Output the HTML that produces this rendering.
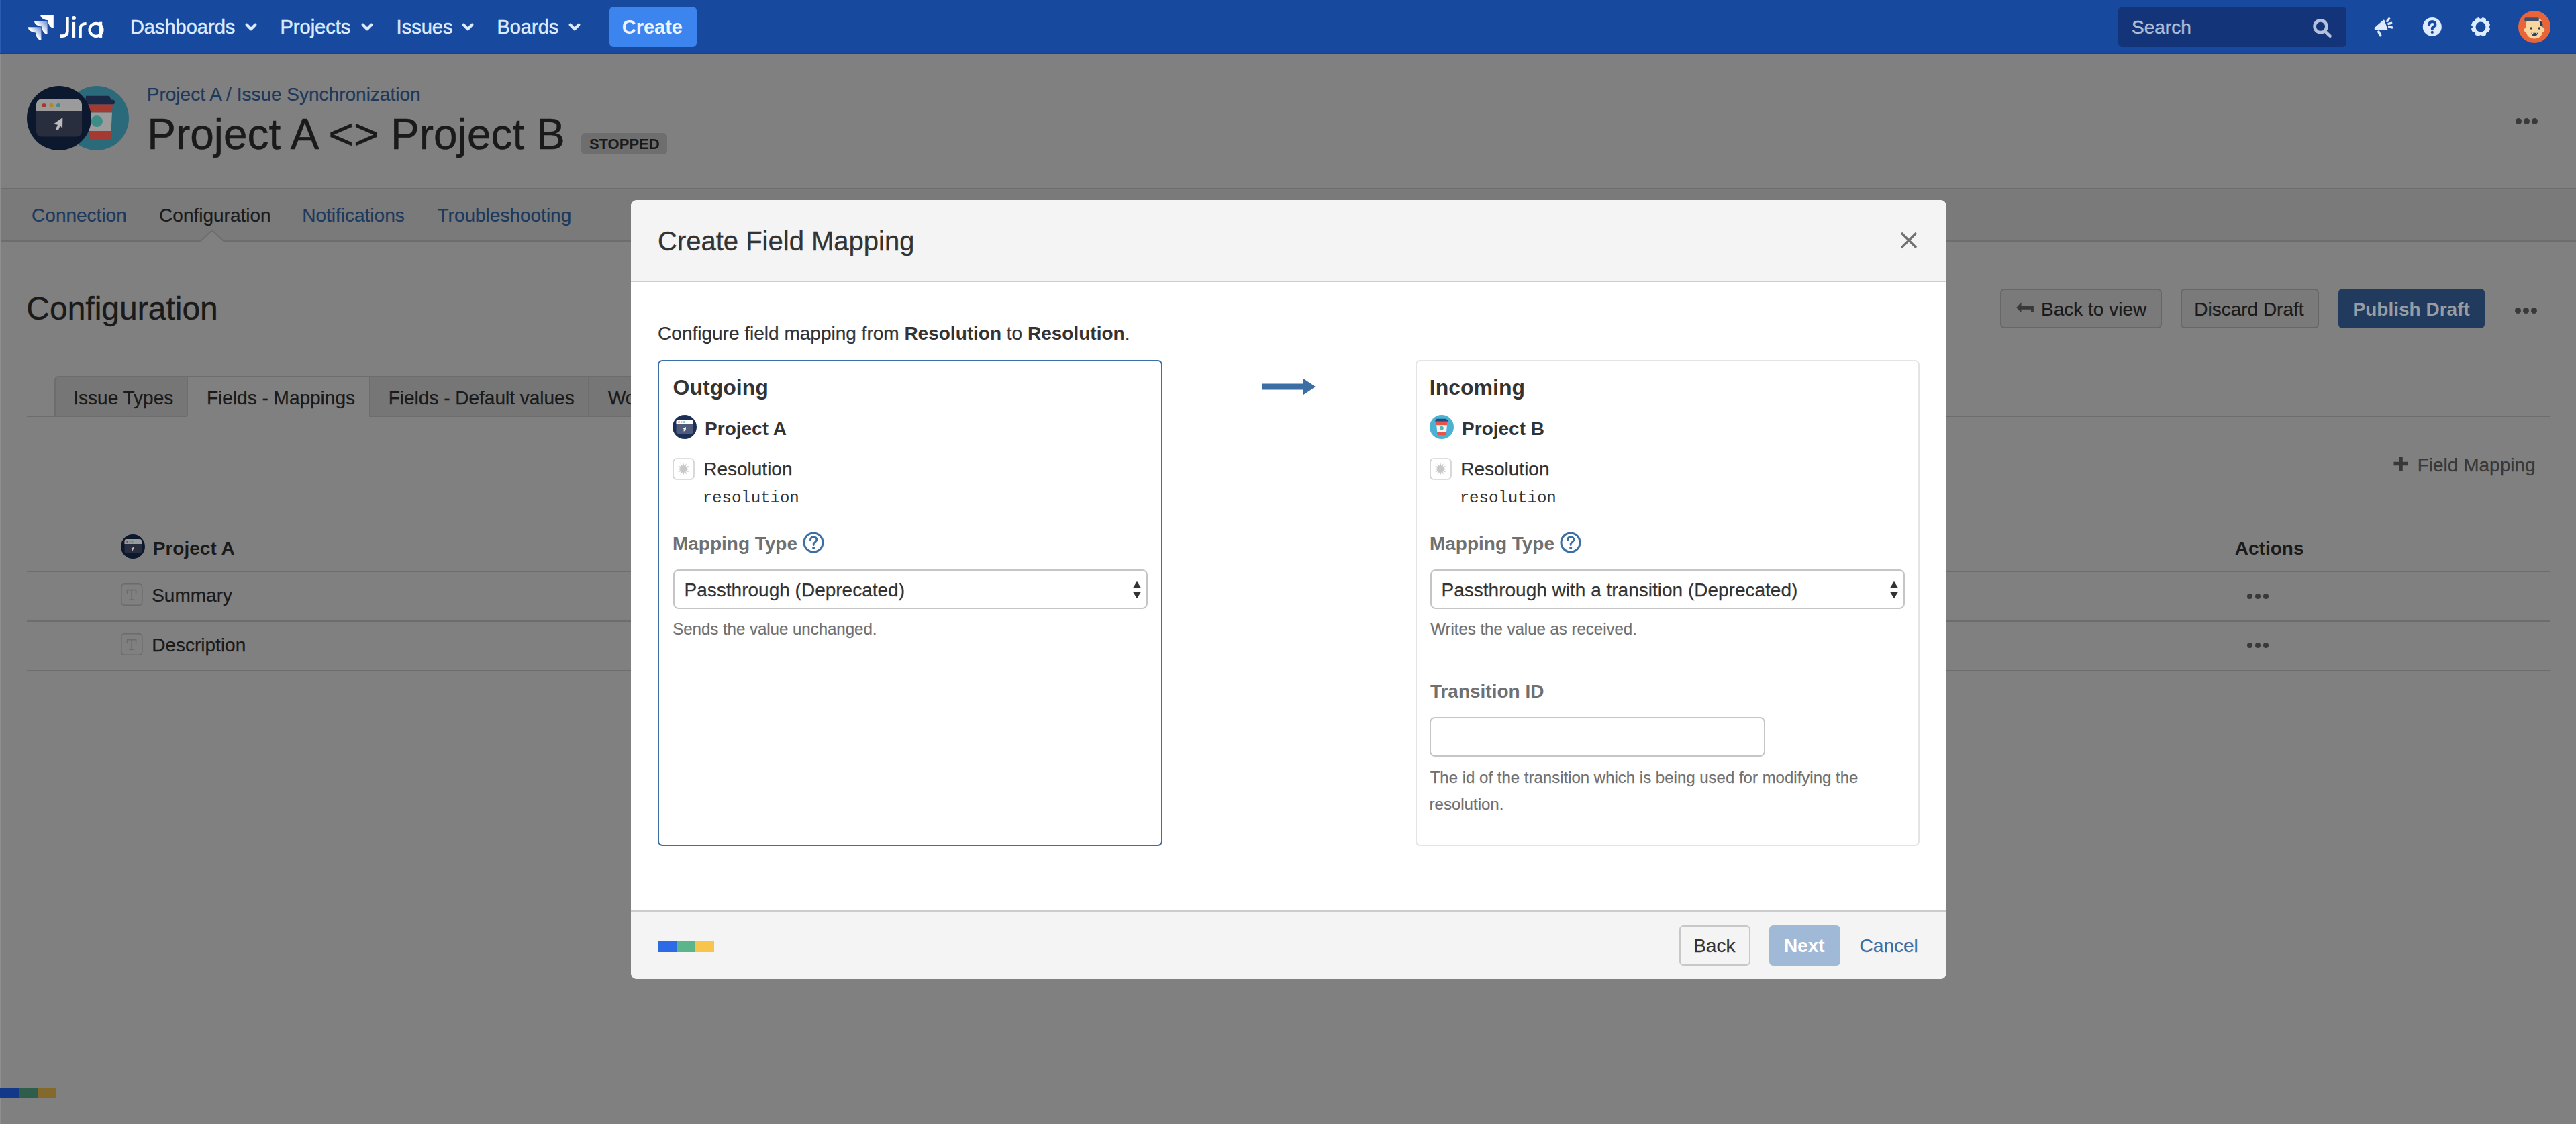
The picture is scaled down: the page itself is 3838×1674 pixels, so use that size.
<!DOCTYPE html>
<html><head><meta charset="utf-8"><title>Create Field Mapping</title>
<style>
html,body{margin:0;padding:0;width:3838px;height:1674px;overflow:hidden;background:#808080;font-family:"Liberation Sans",sans-serif}
.t{position:absolute;white-space:pre}
.sw{-webkit-text-stroke:0.25px currentColor}
.sw b{-webkit-text-stroke:0}
.b{position:absolute;display:block}
b{font-weight:700}
</style></head><body>
<div class="b" style="left:0px;top:0px;width:3838px;height:80px;background:#174a9f"></div>
<svg class="b" style="left:30px;top:15px" width="130" height="50" viewBox="0 0 130 50"><defs><linearGradient id="jg" gradientUnits="objectBoundingBox" x1="1" y1="0" x2="0.45" y2="0.5"><stop offset="0" stop-color="#5f83cf"/><stop offset="1" stop-color="#fff"/></linearGradient></defs><path d="M30.2 6.9 H49.8 V26.5 A8.3 11.3 0 0 1 41.5 15.200000000000001 A11.3 8.3 0 0 1 30.2 6.9 Z" fill="#fff"/><path d="M21 16.1 H40.6 V35.7 A8.3 11.3 0 0 1 32.3 24.400000000000002 A11.3 8.3 0 0 1 21 16.1 Z" fill="url(#jg)"/><path d="M11.8 25.2 H31.400000000000002 V44.8 A8.3 11.3 0 0 1 23.1 33.5 A11.3 8.3 0 0 1 11.8 25.2 Z" fill="url(#jg)"/><g fill="none" stroke="#fff" stroke-width="4.6"><path d="M70.4 10.9 V31 Q70.4 38.6 63 38.6 H59.3"/><path d="M80 17.9 V40.9" stroke-width="4.2"/><path d="M89.7 40.9 V27.5 Q89.7 20 98.6 20" stroke-width="4.2"/><circle cx="113" cy="29.3" r="9.5" stroke-width="4.2"/><path d="M120.1 17.7 V40.9" stroke-width="4.2"/></g><circle cx="80" cy="11.9" r="2.9" fill="#fff"/></svg>
<div class="t sw" style="left:193.9px;top:26.30px;font-size:29px;line-height:29px;font-weight:400;color:#deebff;font-family:'Liberation Sans',sans-serif;transform-origin:0 24.6px;-webkit-text-stroke:0.5px currentColor">Dashboards</div>
<svg class="b" style="left:363.5px;top:30px" width="20.0" height="20" viewBox="0 0 20.0 20"><path d="M3.7 6.7 L10 13.2 L16.3 6.7" fill="none" stroke="#deebff" stroke-width="4.3" stroke-linecap="round" stroke-linejoin="round"/></svg>
<div class="t sw" style="left:417.5px;top:26.30px;font-size:29px;line-height:29px;font-weight:400;color:#deebff;font-family:'Liberation Sans',sans-serif;transform-origin:0 24.6px;-webkit-text-stroke:0.5px currentColor">Projects</div>
<svg class="b" style="left:536.8px;top:30px" width="20.0" height="20" viewBox="0 0 20.0 20"><path d="M3.7 6.7 L10 13.2 L16.3 6.7" fill="none" stroke="#deebff" stroke-width="4.3" stroke-linecap="round" stroke-linejoin="round"/></svg>
<div class="t sw" style="left:590.6px;top:26.30px;font-size:29px;line-height:29px;font-weight:400;color:#deebff;font-family:'Liberation Sans',sans-serif;transform-origin:0 24.6px;-webkit-text-stroke:0.5px currentColor">Issues</div>
<svg class="b" style="left:686.8px;top:30px" width="20.0" height="20" viewBox="0 0 20.0 20"><path d="M3.7 6.7 L10 13.2 L16.3 6.7" fill="none" stroke="#deebff" stroke-width="4.3" stroke-linecap="round" stroke-linejoin="round"/></svg>
<div class="t sw" style="left:740.4px;top:26.30px;font-size:29px;line-height:29px;font-weight:400;color:#deebff;font-family:'Liberation Sans',sans-serif;transform-origin:0 24.6px;-webkit-text-stroke:0.5px currentColor">Boards</div>
<svg class="b" style="left:845.5px;top:30px" width="20.0" height="20" viewBox="0 0 20.0 20"><path d="M3.7 6.7 L10 13.2 L16.3 6.7" fill="none" stroke="#deebff" stroke-width="4.3" stroke-linecap="round" stroke-linejoin="round"/></svg>
<div class="b" style="left:908px;top:10px;width:130px;height:60px;background:#3c85ef;border-radius:6px"></div>
<div class="t" style="left:926.7px;top:25.80px;font-size:29px;line-height:29px;font-weight:700;color:#eef3ff;font-family:'Liberation Sans',sans-serif;transform-origin:0 24.6px;">Create</div>
<div class="b" style="left:3156px;top:10px;width:340px;height:60px;background:#133478;border-radius:6px"></div>
<div class="t sw" style="left:3176.0px;top:27.30px;font-size:28px;line-height:28px;font-weight:400;color:#b0bdd9;font-family:'Liberation Sans',sans-serif;transform-origin:0 23.7px;-webkit-text-stroke:0.45px currentColor">Search</div>
<svg class="b" style="left:3440px;top:22px" width="40" height="38" viewBox="0 0 40 38"><circle cx="17.5" cy="17.3" r="8.9" fill="none" stroke="#b4c0dc" stroke-width="4.7"/><path d="M24.6 25 L31.6 31.7" stroke="#b4c0dc" stroke-width="4.6" stroke-linecap="round"/></svg>
<svg class="b" style="left:3534px;top:24px" width="36" height="32" viewBox="0 0 36 32"><path d="M4.6 17.8 L17.7 6.5 L22.3 19.6 L5 19.9Z" fill="#deebff" stroke="#deebff" stroke-width="2" stroke-linejoin="round"/><path d="M10 23.2 L12.6 28.6" stroke="#deebff" stroke-width="3.8" stroke-linecap="round"/><path d="M22.8 7.6 L25.6 3.8" stroke="#deebff" stroke-width="3.4" stroke-linecap="round"/><path d="M24.8 11.4 L28.7 10.3" stroke="#deebff" stroke-width="3.4" stroke-linecap="round"/><path d="M25.6 15.8 L29.8 16.9" stroke="#deebff" stroke-width="3.4" stroke-linecap="round"/></svg>
<svg class="b" style="left:3608px;top:24px" width="32" height="32" viewBox="0 0 32 32"><circle cx="15.8" cy="15.9" r="14" fill="#deebff"/><path d="M11.3 12.6 C11.3 9.6 13.3 7.9 15.8 7.9 C18.4 7.9 20.4 9.7 20.4 12.2 C20.4 15 17.6 15.6 16 17.3 L15.8 19.3" fill="none" stroke="#174a9f" stroke-width="4" stroke-linecap="round"/><circle cx="15.8" cy="23.9" r="2.1" fill="#174a9f"/></svg>
<svg class="b" style="left:3680px;top:24px" width="32" height="32" viewBox="0 0 32 32"><circle cx="16" cy="16" r="12" fill="#deebff"/><path d="M27.55 17.07 L29.36 19.03 L27.59 23.31 L24.93 23.41 L23.41 24.93 L23.31 27.59 L19.03 29.36 L17.07 27.55 L14.93 27.55 L12.97 29.36 L8.69 27.59 L8.59 24.93 L7.07 23.41 L4.41 23.31 L2.64 19.03 L4.45 17.07 L4.45 14.93 L2.64 12.97 L4.41 8.69 L7.07 8.59 L8.59 7.07 L8.69 4.41 L12.97 2.64 L14.93 4.45 L17.07 4.45 L19.03 2.64 L23.31 4.41 L23.41 7.07 L24.93 8.59 L27.59 8.69 L29.36 12.97 L27.55 14.93Z" fill="#deebff" stroke="#deebff" stroke-width="1.2" stroke-linejoin="round"/><circle cx="16" cy="16" r="7.5" fill="#174a9f"/></svg>
<svg class="b" style="left:3752px;top:16px" width="48" height="48" viewBox="0 0 48 48"><circle cx="24" cy="24" r="24" fill="#ea643a"/><path d="M11.5 22 C11.5 13 16 11 24 11 C32 11 36.5 13 36.5 22 L36.5 29 C36.5 37 31 41.5 24 41.5 C17 41.5 11.5 37 11.5 29Z" fill="#f7d79f"/><circle cx="11.5" cy="28.5" r="2.8" fill="#f7d79f"/><circle cx="36.5" cy="28.5" r="2.8" fill="#f7d79f"/><rect x="9.3" y="10.3" width="21.5" height="5.2" rx="1.5" fill="#3f4e6e"/><path d="M31.5 15.5 C35 15 37 18 36.5 24 L33 22.5 Z" fill="#233559"/><circle cx="19.2" cy="26" r="1.7" fill="#3a3a3a"/><circle cx="31.3" cy="26" r="1.7" fill="#3a3a3a"/><path d="M19.3 32.8 H29.2 C28.4 36.5 26.4 38 24.2 38 C22 38 20.1 36.5 19.3 32.8Z" fill="#34405e"/><path d="M20.5 32.8 l1 2.3 l1.2-2.3Z M25.8 32.8 l1.2 2.3 l1-2.3Z" fill="#fff"/></svg>
<svg class="b" style="left:36px;top:124px" width="160" height="104" viewBox="0 0 160 104"><circle cx="108" cy="52" r="48" fill="#2b6a7b"/><path d="M92 18.8 L127 18.8 L129.5 24.5 L131.5 24.5 A3.5 3.5 0 0 1 131.5 31.6 L91 31.6Z" fill="#1a2846"/><path d="M91.5 31.6 L132 31.6 L130.7 43.6 L93 43.6Z" fill="#a43a31"/><path d="M93 43.6 L131 43.6 L129.5 70.9 L95.5 70.9Z" fill="#9c9c9c"/><path d="M95.5 70.9 L129.5 70.9 L128.5 84.5 L97 84.5Z" fill="#a43a31"/><circle cx="108.3" cy="56.5" r="8.6" fill="#3b8d86"/><circle cx="52" cy="52" r="48" fill="#0c182e"/><rect x="18" y="23.5" width="68" height="56" rx="8" fill="#282e3d"/><path d="M26 23.5 H78 A8 8 0 0 1 86 31.5 V41.5 H18 V31.5 A8 8 0 0 1 26 23.5Z" fill="#9b9b9b"/><circle cx="29.5" cy="33" r="3" fill="#a33a30"/><circle cx="40.5" cy="33" r="3" fill="#b3842b"/><circle cx="51" cy="33" r="3" fill="#3c8c87"/><path d="M56.9 51.7 L44.8 60.3 L50.6 61.4 L47.4 68.4 L50.5 69.6 L53.6 62.6 L56.6 66.2Z" fill="#bcbcbc" stroke="#bcbcbc" stroke-width="0.8" stroke-linejoin="round"/></svg>
<div class="t sw" style="left:218.8px;top:127.30px;font-size:28px;line-height:28px;font-weight:400;color:#1d395c;font-family:'Liberation Sans',sans-serif;transform-origin:0 23.7px;">Project A / Issue Synchronization</div>
<div class="t sw" style="left:219.2px;top:168.31px;font-size:64px;line-height:64px;font-weight:400;color:#1a1a1a;font-family:'Liberation Sans',sans-serif;transform-origin:0 54.2px;-webkit-text-stroke:0.5px currentColor">Project A &lt;&gt; Project B</div>
<div class="b" style="left:866px;top:198px;width:128px;height:32px;background:#6e6e6e;border-radius:6px"></div>
<div class="t" style="left:877.9px;top:203.91px;font-size:22px;line-height:22px;font-weight:700;color:#1a1a1a;font-family:'Liberation Sans',sans-serif;transform-origin:0 18.6px;">STOPPED</div>
<div class="b" style="left:3748.0px;top:175.5px;width:9.0px;height:9.0px;background:#393939;border-radius:50%"></div>
<div class="b" style="left:3759.75px;top:175.5px;width:9.0px;height:9.0px;background:#393939;border-radius:50%"></div>
<div class="b" style="left:3771.5px;top:175.5px;width:9.0px;height:9.0px;background:#393939;border-radius:50%"></div>
<div class="b" style="left:0px;top:282px;width:3838px;height:76px;background:#7a7a7b"></div>
<div class="b" style="left:0px;top:280px;width:3838px;height:2px;background:#6d6d6d"></div>
<svg class="b" style="left:0px;top:330px" width="3838" height="32" viewBox="0 0 3838 32"><path d="M0 29 H299 L316 13 L333 29 H3838" fill="#808080" stroke="none"/><path d="M0 28.5 H299 L316 12 L333 28.5 H3838 V32 H0Z" fill="#808080"/><path d="M0 29 H299 L316 13 L333 29 H3838" fill="none" stroke="#6d6d6d" stroke-width="2"/></svg>
<div class="t sw" style="left:47.1px;top:307.00px;font-size:28px;line-height:28px;font-weight:400;color:#1d395c;font-family:'Liberation Sans',sans-serif;transform-origin:0 23.7px;">Connection</div>
<div class="t sw" style="left:237.1px;top:307.00px;font-size:28px;line-height:28px;font-weight:400;color:#1a1a1a;font-family:'Liberation Sans',sans-serif;transform-origin:0 23.7px;">Configuration</div>
<div class="t sw" style="left:450.2px;top:307.00px;font-size:28px;line-height:28px;font-weight:400;color:#1d395c;font-family:'Liberation Sans',sans-serif;transform-origin:0 23.7px;">Notifications</div>
<div class="t sw" style="left:651.5px;top:307.00px;font-size:28px;line-height:28px;font-weight:400;color:#1d395c;font-family:'Liberation Sans',sans-serif;transform-origin:0 23.7px;">Troubleshooting</div>
<div class="t sw" style="left:39.3px;top:436.31px;font-size:48px;line-height:48px;font-weight:400;color:#1a1a1a;font-family:'Liberation Sans',sans-serif;transform-origin:0 40.6px;-webkit-text-stroke:0.4px currentColor">Configuration</div>
<div class="b" style="left:2980px;top:430px;width:241px;height:59px;background:#7a7a7a;border:2px solid #676767;border-radius:6px;box-sizing:border-box"></div>
<svg class="b" style="left:3002px;top:450px" width="30" height="22" viewBox="0 0 30 22"><path d="M2.2 7.9 L9.5 0.3 V5.1 H27.9 V14.9 H24 V10.8 H9.5 V15.4 Z" fill="#393939"/></svg>
<div class="t sw" style="left:3041.0px;top:447.30px;font-size:28px;line-height:28px;font-weight:400;color:#1a1a1a;font-family:'Liberation Sans',sans-serif;transform-origin:0 23.7px;">Back to view</div>
<div class="b" style="left:3249px;top:430px;width:206px;height:59px;background:#7a7a7a;border:2px solid #676767;border-radius:6px;box-sizing:border-box"></div>
<div class="t sw" style="left:3269.2px;top:447.30px;font-size:28px;line-height:28px;font-weight:400;color:#1a1a1a;font-family:'Liberation Sans',sans-serif;transform-origin:0 23.7px;">Discard Draft</div>
<div class="b" style="left:3484px;top:430px;width:218px;height:59px;background:#213b5e;border-radius:6px"></div>
<div class="t" style="left:3505.6px;top:447.30px;font-size:28px;line-height:28px;font-weight:700;color:#989da4;font-family:'Liberation Sans',sans-serif;transform-origin:0 23.7px;">Publish Draft</div>
<div class="b" style="left:3747.0px;top:457.5px;width:9.0px;height:9.0px;background:#393939;border-radius:50%"></div>
<div class="b" style="left:3759.0px;top:457.5px;width:9.0px;height:9.0px;background:#393939;border-radius:50%"></div>
<div class="b" style="left:3771.0px;top:457.5px;width:9.0px;height:9.0px;background:#393939;border-radius:50%"></div>
<div class="b" style="left:81px;top:560px;width:1019px;height:61px;background:#767676;border-top:2px solid #6d6d6d;border-left:2px solid #6d6d6d;border-radius:6px 0 0 0;box-sizing:border-box"></div>
<div class="b" style="left:279px;top:562px;width:272px;height:59px;background:#808080"></div>
<div class="b" style="left:278px;top:562px;width:2px;height:57px;background:#6d6d6d"></div>
<div class="b" style="left:550px;top:562px;width:2px;height:59px;background:#6d6d6d"></div>
<div class="b" style="left:876px;top:562px;width:2px;height:59px;background:#6d6d6d"></div>
<div class="b" style="left:40px;top:619px;width:239px;height:2px;background:#6d6d6d"></div>
<div class="b" style="left:551px;top:619px;width:3249px;height:2px;background:#6d6d6d"></div>
<div class="t sw" style="left:109.3px;top:579.30px;font-size:28px;line-height:28px;font-weight:400;color:#1a1a1a;font-family:'Liberation Sans',sans-serif;transform-origin:0 23.7px;">Issue Types</div>
<div class="t sw" style="left:308.0px;top:579.30px;font-size:28px;line-height:28px;font-weight:400;color:#1a1a1a;font-family:'Liberation Sans',sans-serif;transform-origin:0 23.7px;">Fields - Mappings</div>
<div class="t sw" style="left:578.7px;top:579.30px;font-size:28px;line-height:28px;font-weight:400;color:#1a1a1a;font-family:'Liberation Sans',sans-serif;transform-origin:0 23.7px;">Fields - Default values</div>
<div class="t sw" style="left:905.9px;top:579.30px;font-size:28px;line-height:28px;font-weight:400;color:#1a1a1a;font-family:'Liberation Sans',sans-serif;transform-origin:0 23.7px;">Workflows</div>
<svg class="b" style="left:3564px;top:678px" width="26" height="25" viewBox="0 0 26 25"><path d="M13 2 V23 M2.5 12.5 H23.5" stroke="#383838" stroke-width="5.5"/></svg>
<div class="t sw" style="left:3601.7px;top:679.30px;font-size:28px;line-height:28px;font-weight:400;color:#383838;font-family:'Liberation Sans',sans-serif;transform-origin:0 23.7px;">Field Mapping</div>
<svg class="b" style="left:180px;top:796px" width="36" height="36" viewBox="0 0 36 36"><circle cx="18" cy="18" r="18" fill="#0c182e"/><rect x="5.5" y="7" width="25.5" height="21" rx="3" fill="#282e3d"/><path d="M8.5 7 H28 A3 3 0 0 1 31 10 V14 H5.5 V10 A3 3 0 0 1 8.5 7Z" fill="#9b9b9b"/><circle cx="9.5" cy="10.6" r="1.3" fill="#a33a30"/><circle cx="13.3" cy="10.6" r="1.3" fill="#b3842b"/><circle cx="17" cy="10.6" r="1.3" fill="#3c8c87"/><path d="M19.84 17.89 L15.30 21.11 L17.48 21.52 L16.27 24.15 L17.44 24.60 L18.60 21.98 L19.73 23.33Z" fill="#bcbcbc"/></svg>
<div class="t" style="left:227.8px;top:803.30px;font-size:28px;line-height:28px;font-weight:700;color:#1a1a1a;font-family:'Liberation Sans',sans-serif;transform-origin:0 23.7px;">Project A</div>
<div class="t" style="left:3329.8px;top:802.80px;font-size:28px;line-height:28px;font-weight:700;color:#1a1a1a;font-family:'Liberation Sans',sans-serif;transform-origin:0 23.7px;">Actions</div>
<div class="b" style="left:40px;top:850px;width:3760px;height:2px;background:#6d6d6d"></div>
<div class="b" style="left:40px;top:924px;width:3760px;height:2px;background:#6d6d6d"></div>
<div class="b" style="left:40px;top:998px;width:3760px;height:2px;background:#6d6d6d"></div>
<svg class="b" style="left:180px;top:869px" width="33" height="33" viewBox="0 0 33 33"><rect x="0.8" y="0.8" width="31" height="31.4" rx="4.5" fill="none" stroke="#6b6b6b" stroke-width="1.6"/><g fill="none" stroke="#6b6b6b" stroke-width="1.7"><path d="M9.6 15.2 V9.6 H22.6 V15.2"/><path d="M16.1 9.6 V24.2"/><path d="M12 24.2 H20.2"/></g></svg>
<div class="t sw" style="left:226.2px;top:873.30px;font-size:28px;line-height:28px;font-weight:400;color:#1a1a1a;font-family:'Liberation Sans',sans-serif;transform-origin:0 23.7px;">Summary</div>
<div class="b" style="left:3347.8px;top:883.8px;width:8.399999999999636px;height:8.400000000000091px;background:#393939;border-radius:50%"></div>
<div class="b" style="left:3359.8px;top:883.8px;width:8.399999999999636px;height:8.400000000000091px;background:#393939;border-radius:50%"></div>
<div class="b" style="left:3371.8px;top:883.8px;width:8.399999999999636px;height:8.400000000000091px;background:#393939;border-radius:50%"></div>
<svg class="b" style="left:180px;top:943px" width="33" height="33" viewBox="0 0 33 33"><rect x="0.8" y="0.8" width="31" height="31.4" rx="4.5" fill="none" stroke="#6b6b6b" stroke-width="1.6"/><g fill="none" stroke="#6b6b6b" stroke-width="1.7"><path d="M9.6 15.2 V9.6 H22.6 V15.2"/><path d="M16.1 9.6 V24.2"/><path d="M12 24.2 H20.2"/></g></svg>
<div class="t sw" style="left:226.2px;top:947.30px;font-size:28px;line-height:28px;font-weight:400;color:#1a1a1a;font-family:'Liberation Sans',sans-serif;transform-origin:0 23.7px;">Description</div>
<div class="b" style="left:3347.8px;top:956.8px;width:8.399999999999636px;height:8.400000000000091px;background:#393939;border-radius:50%"></div>
<div class="b" style="left:3359.8px;top:956.8px;width:8.399999999999636px;height:8.400000000000091px;background:#393939;border-radius:50%"></div>
<div class="b" style="left:3371.8px;top:956.8px;width:8.399999999999636px;height:8.400000000000091px;background:#393939;border-radius:50%"></div>
<div class="b" style="left:0px;top:80px;width:1px;height:1594px;background:#8e8e8e"></div>
<div class="b" style="left:0px;top:0px;width:1px;height:80px;background:#2c5cb0"></div>
<div class="b" style="left:0px;top:79px;width:3838px;height:1px;background:#15428f"></div>
<div class="b" style="left:0px;top:1620px;width:28px;height:16px;background:#12388a"></div>
<div class="b" style="left:28px;top:1620px;width:28px;height:16px;background:#2e5e4b"></div>
<div class="b" style="left:56px;top:1620px;width:28px;height:16px;background:#836a2c"></div>
<div class="b" style="left:940px;top:298px;width:1960px;height:1160px;background:#fff;border-radius:9px;overflow:hidden"></div>
<div class="b" style="left:940px;top:298px;width:1960px;height:120px;background:#f4f4f4;border-radius:9px 9px 0 0"></div>
<div class="b" style="left:940px;top:418px;width:1960px;height:2px;background:#cccccc"></div>
<div class="t sw" style="left:980.0px;top:339.00px;font-size:40px;line-height:40px;font-weight:400;color:#333;font-family:'Liberation Sans',sans-serif;transform-origin:0 33.9px;-webkit-text-stroke:0.35px currentColor">Create Field Mapping</div>
<svg class="b" style="left:2830px;top:344px" width="28" height="28" viewBox="0 0 28 28"><path d="M3 3 L25 25 M25 3 L3 25" stroke="#707070" stroke-width="3.2"/></svg>
<div class="t sw" style="left:980.1px;top:483.30px;font-size:28px;line-height:28px;font-weight:400;color:#333;font-family:'Liberation Sans',sans-serif;transform-origin:0 23.7px;">Configure field mapping from <b>Resolution</b> to <b>Resolution</b>.</div>
<div class="b" style="left:980px;top:536px;width:752px;height:724px;border:2px solid #3b6ea5;border-radius:7px;box-sizing:border-box"></div>
<div class="b" style="left:2109px;top:536px;width:751px;height:724px;border:2px solid #e4e4e4;border-radius:7px;box-sizing:border-box"></div>
<svg class="b" style="left:1878px;top:562px" width="84" height="28" viewBox="0 0 84 28"><path d="M2 9.5 H64 V2 L82 14 L64 26 V18.5 H2Z" fill="#3b6ea5"/></svg>
<div class="t" style="left:1002.6px;top:561.31px;font-size:32px;line-height:32px;font-weight:700;color:#333;font-family:'Liberation Sans',sans-serif;transform-origin:0 27.1px;">Outgoing</div>
<div class="t" style="left:1050.1px;top:625.30px;font-size:28px;line-height:28px;font-weight:700;color:#333;font-family:'Liberation Sans',sans-serif;transform-origin:0 23.7px;">Project A</div>
<svg class="b" style="left:1001.5px;top:681.5px" width="33.0" height="33.0" viewBox="0 0 33.0 33.0"><rect x="1" y="1" width="31" height="31" rx="5.5" fill="#fff" stroke="#d3d3d3" stroke-width="1.7"/><path d="M25.70 16.50 L20.84 17.74 L24.43 21.25 L19.59 19.89 L20.95 24.73 L17.44 21.14 L16.20 26.00 L14.96 21.14 L11.45 24.73 L12.81 19.89 L7.97 21.25 L11.56 17.74 L6.70 16.50 L11.56 15.26 L7.97 11.75 L12.81 13.11 L11.45 8.27 L14.96 11.86 L16.20 7.00 L17.44 11.86 L20.95 8.27 L19.59 13.11 L24.43 11.75 L20.84 15.26Z" fill="#c8c8c8"/></svg>
<div class="t sw" style="left:1048.2px;top:685.30px;font-size:28px;line-height:28px;font-weight:400;color:#333;font-family:'Liberation Sans',sans-serif;transform-origin:0 23.7px;">Resolution</div>
<div class="t" style="left:1046.7px;top:730.30px;font-size:24px;line-height:24px;font-weight:400;color:#333;font-family:'Liberation Mono',monospace;transform-origin:0 18.4px;">resolution</div>
<div class="t" style="left:1001.9px;top:796.00px;font-size:28px;line-height:28px;font-weight:700;color:#707070;font-family:'Liberation Sans',sans-serif;transform-origin:0 23.7px;">Mapping Type</div>
<svg class="b" style="left:1196px;top:792px" width="33" height="33" viewBox="0 0 33 33"><circle cx="16" cy="16" r="14" fill="none" stroke="#3b6ea5" stroke-width="3"/><path d="M11.5 12.5 C11.5 9.3 13.6 7.6 16.2 7.6 C18.9 7.6 20.8 9.4 20.8 11.8 C20.8 14.8 17.1 15.3 16.2 17.8 L16.2 19.6" fill="none" stroke="#3b6ea5" stroke-width="2.9" stroke-linecap="round"/><circle cx="16.2" cy="24" r="2.1" fill="#3b6ea5"/></svg>
<div class="b" style="left:1003px;top:848px;width:707px;height:59px;border:2px solid #c5c5c5;border-radius:8px;box-sizing:border-box;background:#fff"></div>
<div class="t sw" style="left:1019.6px;top:864.80px;font-size:28px;line-height:28px;font-weight:400;color:#333;font-family:'Liberation Sans',sans-serif;transform-origin:0 23.7px;">Passthrough (Deprecated)</div>
<svg class="b" style="left:1686.5px;top:864.5px" width="16.0" height="28.0" viewBox="0 0 16.0 28.0"><path d="M0.7 11 L7 0.8 L13.3 11Z M0.7 16 L7 26.2 L13.3 16Z" fill="#333"/></svg>
<div class="t sw" style="left:1002.2px;top:925.32px;font-size:24px;line-height:24px;font-weight:400;color:#707070;font-family:'Liberation Sans',sans-serif;transform-origin:0 20.3px;">Sends the value unchanged.</div>
<svg class="b" style="left:1002px;top:618px" width="36" height="36" viewBox="0 0 36 36"><circle cx="18" cy="18" r="18" fill="#1b2e58"/><rect x="5.5" y="7" width="25.5" height="21" rx="3" fill="#4f5b7b"/><path d="M8.5 7 H28 A3 3 0 0 1 31 10 V14 H5.5 V10 A3 3 0 0 1 8.5 7Z" fill="#ffffff"/><circle cx="9.5" cy="10.6" r="1.3" fill="#e5493a"/><circle cx="13.3" cy="10.6" r="1.3" fill="#f0b43c"/><circle cx="17" cy="10.6" r="1.3" fill="#4dc4bb"/><path d="M19.84 17.89 L15.30 21.11 L17.48 21.52 L16.27 24.15 L17.44 24.60 L18.60 21.98 L19.73 23.33Z" fill="#ffffff"/></svg>
<div class="t" style="left:2129.8px;top:561.31px;font-size:32px;line-height:32px;font-weight:700;color:#333;font-family:'Liberation Sans',sans-serif;transform-origin:0 27.1px;">Incoming</div>
<div class="t" style="left:2178.1px;top:625.30px;font-size:28px;line-height:28px;font-weight:700;color:#333;font-family:'Liberation Sans',sans-serif;transform-origin:0 23.7px;">Project B</div>
<svg class="b" style="left:2129.5px;top:681.5px" width="33.0" height="33.0" viewBox="0 0 33.0 33.0"><rect x="1" y="1" width="31" height="31" rx="5.5" fill="#fff" stroke="#d3d3d3" stroke-width="1.7"/><path d="M25.70 16.50 L20.84 17.74 L24.43 21.25 L19.59 19.89 L20.95 24.73 L17.44 21.14 L16.20 26.00 L14.96 21.14 L11.45 24.73 L12.81 19.89 L7.97 21.25 L11.56 17.74 L6.70 16.50 L11.56 15.26 L7.97 11.75 L12.81 13.11 L11.45 8.27 L14.96 11.86 L16.20 7.00 L17.44 11.86 L20.95 8.27 L19.59 13.11 L24.43 11.75 L20.84 15.26Z" fill="#c8c8c8"/></svg>
<div class="t sw" style="left:2176.2px;top:685.30px;font-size:28px;line-height:28px;font-weight:400;color:#333;font-family:'Liberation Sans',sans-serif;transform-origin:0 23.7px;">Resolution</div>
<div class="t" style="left:2174.7px;top:730.30px;font-size:24px;line-height:24px;font-weight:400;color:#333;font-family:'Liberation Mono',monospace;transform-origin:0 18.4px;">resolution</div>
<div class="t" style="left:2129.9px;top:796.00px;font-size:28px;line-height:28px;font-weight:700;color:#707070;font-family:'Liberation Sans',sans-serif;transform-origin:0 23.7px;">Mapping Type</div>
<svg class="b" style="left:2324px;top:792px" width="33" height="33" viewBox="0 0 33 33"><circle cx="16" cy="16" r="14" fill="none" stroke="#3b6ea5" stroke-width="3"/><path d="M11.5 12.5 C11.5 9.3 13.6 7.6 16.2 7.6 C18.9 7.6 20.8 9.4 20.8 11.8 C20.8 14.8 17.1 15.3 16.2 17.8 L16.2 19.6" fill="none" stroke="#3b6ea5" stroke-width="2.9" stroke-linecap="round"/><circle cx="16.2" cy="24" r="2.1" fill="#3b6ea5"/></svg>
<div class="b" style="left:2131px;top:848px;width:707px;height:59px;border:2px solid #c5c5c5;border-radius:8px;box-sizing:border-box;background:#fff"></div>
<div class="t sw" style="left:2147.6px;top:864.80px;font-size:28px;line-height:28px;font-weight:400;color:#333;font-family:'Liberation Sans',sans-serif;transform-origin:0 23.7px;">Passthrough with a transition (Deprecated)</div>
<svg class="b" style="left:2814.5px;top:864.5px" width="16.0" height="28.0" viewBox="0 0 16.0 28.0"><path d="M0.7 11 L7 0.8 L13.3 11Z M0.7 16 L7 26.2 L13.3 16Z" fill="#333"/></svg>
<div class="t sw" style="left:2131.2px;top:925.32px;font-size:24px;line-height:24px;font-weight:400;color:#707070;font-family:'Liberation Sans',sans-serif;transform-origin:0 20.3px;">Writes the value as received.</div>
<svg class="b" style="left:2130px;top:618px" width="36" height="36" viewBox="0 0 36 36"><circle cx="18" cy="18" r="18" fill="#4cb2d4"/><path d="M10.5 5.7 H25 L26 8 H27.6 V9.7 H8.4 V8 H9.5Z" fill="#234a78"/><path d="M9.7 9.7 H26.3 L25.9 15.3 H10.2Z" fill="#e9534b"/><path d="M10.2 15.3 H26 L25 24.9 H11.2Z" fill="#f4f4f4"/><path d="M11.2 24.9 H25 L24.3 30.2 H11.9Z" fill="#e9534b"/><circle cx="17.8" cy="19.8" r="3" fill="#4fbdb1"/></svg>
<div class="t" style="left:2130.9px;top:1015.50px;font-size:28px;line-height:28px;font-weight:700;color:#707070;font-family:'Liberation Sans',sans-serif;transform-origin:0 23.7px;">Transition ID</div>
<div class="b" style="left:2130px;top:1068px;width:500px;height:59px;border:2px solid #c5c5c5;border-radius:8px;box-sizing:border-box;background:#fff"></div>
<div class="t sw" style="left:2130.7px;top:1145.82px;font-size:24px;line-height:24px;font-weight:400;color:#707070;font-family:'Liberation Sans',sans-serif;transform-origin:0 20.3px;">The id of the transition which is being used for modifying the</div>
<div class="t sw" style="left:2129.6px;top:1185.82px;font-size:24px;line-height:24px;font-weight:400;color:#707070;font-family:'Liberation Sans',sans-serif;transform-origin:0 20.3px;">resolution.</div>
<div class="b" style="left:940px;top:1356px;width:1960px;height:102px;background:#f4f4f4;border-radius:0 0 9px 9px"></div>
<div class="b" style="left:940px;top:1356px;width:1960px;height:2px;background:#cccccc"></div>
<div class="b" style="left:980px;top:1402px;width:28px;height:16px;background:#2d6be6"></div>
<div class="b" style="left:1008px;top:1402px;width:28px;height:16px;background:#5ab58b"></div>
<div class="b" style="left:1036px;top:1402px;width:28px;height:16px;background:#f7c54c"></div>
<div class="b" style="left:2502px;top:1378px;width:106px;height:60px;border:2px solid #c8c8c8;border-radius:6px;box-sizing:border-box;background:#f4f4f4"></div>
<div class="t sw" style="left:2523.2px;top:1395.30px;font-size:28px;line-height:28px;font-weight:400;color:#333;font-family:'Liberation Sans',sans-serif;transform-origin:0 23.7px;">Back</div>
<div class="b" style="left:2636px;top:1378px;width:106px;height:60px;background:#a0b9d6;border-radius:6px"></div>
<div class="t" style="left:2657.9px;top:1395.30px;font-size:28px;line-height:28px;font-weight:700;color:#fff;font-family:'Liberation Sans',sans-serif;transform-origin:0 23.7px;">Next</div>
<div class="t sw" style="left:2770.6px;top:1395.30px;font-size:28px;line-height:28px;font-weight:400;color:#3b6ea5;font-family:'Liberation Sans',sans-serif;transform-origin:0 23.7px;">Cancel</div>
<script>(function(){var s=window.innerWidth/3838;if(s>0&&Math.abs(s-1)>0.01){document.documentElement.style.zoom=s;}})();</script>
</body></html>
